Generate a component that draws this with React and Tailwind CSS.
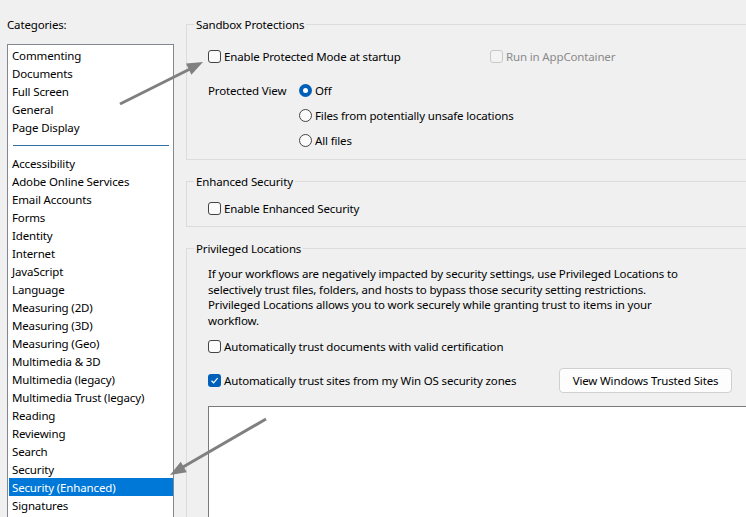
import React from 'react';

const GENERAL = ['Commenting', 'Documents', 'Full Screen', 'General', 'Page Display'];

const SPECIFIC = [
  'Accessibility',
  'Adobe Online Services',
  'Email Accounts',
  'Forms',
  'Identity',
  'Internet',
  'JavaScript',
  'Language',
  'Measuring (2D)',
  'Measuring (3D)',
  'Measuring (Geo)',
  'Multimedia & 3D',
  'Multimedia (legacy)',
  'Multimedia Trust (legacy)',
  'Reading',
  'Reviewing',
  'Search',
  'Security',
  'Security (Enhanced)',
  'Signatures',
];

const SELECTED = 'Security (Enhanced)';

function Checkbox({ checked, disabled }) {
  if (checked) {
    return (
      <span className="flex h-[13px] w-[13px] shrink-0 items-center justify-center rounded-[3px] bg-[#005fb8]">
        <svg width="9" height="9" viewBox="0 0 9 9" fill="none">
          <path d="M1.5 4.8 L3.6 6.8 L7.6 2.2" stroke="white" strokeWidth="1.2" />
        </svg>
      </span>
    );
  }
  return (
    <span
      className={
        disabled
          ? 'h-[13px] w-[13px] shrink-0 rounded-[3px] border border-[#c8c8c8] bg-[#f3f3f3]'
          : 'h-[13px] w-[13px] shrink-0 rounded-[3px] border border-[#444] bg-[#fbfbfb]'
      }
    />
  );
}

function Radio({ checked }) {
  if (checked) {
    return (
      <span className="flex h-[13px] w-[13px] shrink-0 items-center justify-center rounded-full bg-[#005fb8]">
        <span className="h-[5px] w-[5px] rounded-full bg-white" />
      </span>
    );
  }
  return <span className="h-[13px] w-[13px] shrink-0 rounded-full border border-[#444] bg-[#fbfbfb]" />;
}

function Option({ control, label, disabled }) {
  return (
    <div className="flex h-[18px] items-center gap-[3px]">
      {control}
      <span className={disabled ? 'pt-px text-[#8a8a8a]' : 'pt-px text-black'}>{label}</span>
    </div>
  );
}

function Group({ title, className, children }) {
  return (
    <fieldset className={`w-[580px] border border-[#dcdcdc] ${className}`}>
      <legend className="ml-[7px] h-[18px] px-[2px] pt-px leading-[18px] text-black">{title}</legend>
      {children}
    </fieldset>
  );
}

function Arrows() {
  return (
    <svg className="pointer-events-none absolute left-0 top-0" width="746" height="517">
      <g stroke="#808080" strokeWidth="3" fill="#808080">
        <line x1="120" y1="104" x2="190" y2="69" />
        <polygon points="203,62 191.4,74.8 186,63.6" stroke="none" />
        <line x1="266" y1="419" x2="183" y2="467" />
        <polygon points="170,475 186.8,472.3 180.8,461.7" stroke="none" />
      </g>
    </svg>
  );
}

export default function App() {
  return (
    <div
      className="relative flex h-[517px] w-[746px] overflow-hidden bg-[#f0f0f0] text-[11.5px] leading-[18px] tracking-[-0.15px] text-black"
      style={{ fontFamily: '"Noto Sans", "Open Sans", sans-serif' }}
    >
      {/* left: categories list */}
      <div className="w-[186px] shrink-0 pl-[7px] pt-[15px]">
        <div className="h-[18px] pt-px">Categories:</div>
        <div className="mt-[11px] h-[490px] w-[167px] border border-[#828790] bg-white pl-px pt-px">
          {GENERAL.map((name) => (
            <div key={name} className="h-[18px] pl-[3px] pt-px">
              {name}
            </div>
          ))}
          <div className="flex h-[18px] items-center pl-[4px] pr-[4px]">
            <div className="h-px w-full bg-[#2f6f9f]" />
          </div>
          {SPECIFIC.map((name) => (
            <div
              key={name}
              className={
                name === SELECTED
                  ? 'h-[18px] bg-[#0078d7] pl-[3px] pt-px text-white'
                  : 'h-[18px] pl-[3px] pt-px'
              }
            >
              {name}
            </div>
          ))}
        </div>
      </div>

      {/* right: settings groups */}
      <div className="flex shrink-0 flex-col pt-[15px]">
        <Group title="Sandbox Protections">
          <div className="pb-[10px] pl-[21px] pt-[14px]">
            <div className="flex">
              <div className="w-[282px]">
                <Option control={<Checkbox />} label="Enable Protected Mode at startup" />
              </div>
              <Option control={<Checkbox disabled />} label="Run in AppContainer" disabled />
            </div>
            <div className="mt-[16px] flex">
              <div className="h-[18px] w-[91px] pt-px">Protected View</div>
              <div className="flex flex-col gap-[7px]">
                <Option control={<Radio checked />} label="Off" />
                <Option control={<Radio />} label="Files from potentially unsafe locations" />
                <Option control={<Radio />} label="All files" />
              </div>
            </div>
          </div>
        </Group>

        <Group title="Enhanced Security" className="mt-[12px]">
          <div className="pb-[9px] pl-[21px] pt-[9px]">
            <Option control={<Checkbox />} label="Enable Enhanced Security" />
          </div>
        </Group>

        <Group title="Privileged Locations" className="mt-[12px] h-[300px]">
          <div className="pl-[21px] pt-[8px]">
            <p className="pt-px leading-[15.67px]">
              If your workflows are negatively impacted by security settings, use Privileged Locations to
              <br />
              selectively trust files, folders, and hosts to bypass those security setting restrictions.
              <br />
              Privileged Locations allows you to work securely while granting trust to items in your
              <br />
              workflow.
            </p>
            <div className="mt-[9px]">
              <Option control={<Checkbox />} label="Automatically trust documents with valid certification" />
            </div>
            <div className="mt-[12.5px] flex items-center">
              <div className="w-[351px]">
                <Option
                  control={<Checkbox checked />}
                  label="Automatically trust sites from my Win OS security zones"
                />
              </div>
              <button className="h-[25px] w-[173px] rounded-[4px] border border-[#d0d0d0] bg-[#fdfdfd] pt-px text-[11.5px] text-black">
                View Windows Trusted Sites
              </button>
            </div>
            <div className="mt-[13px] h-[120px] w-[560px] border border-[#7a7a7a] bg-white" />
          </div>
        </Group>
      </div>

      <Arrows />
    </div>
  );
}
